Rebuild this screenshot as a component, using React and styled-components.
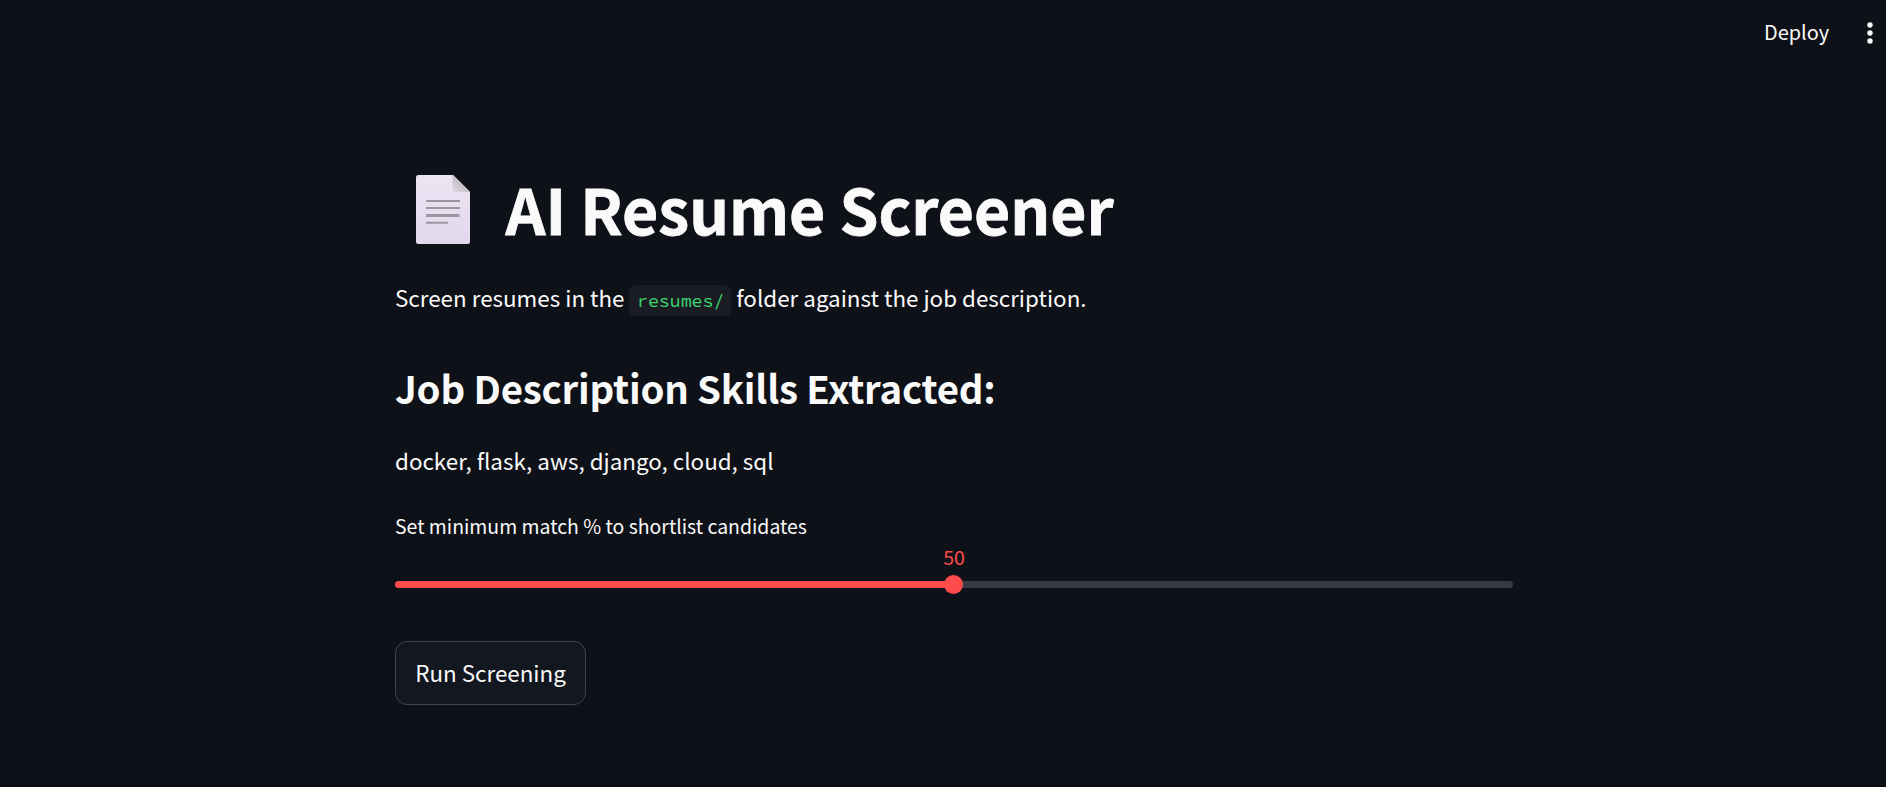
import React from "react";
import styled, { createGlobalStyle } from "styled-components";

const GlobalStyle = createGlobalStyle`
  * { box-sizing: border-box; }
  body {
    margin: 0;
    background: #0e1117;
    color: #fafafa;
    font-family: "Source Sans Pro", "Noto Sans CJK SC", sans-serif;
    overflow: hidden;
  }
`;

const Page = styled.div`
  height: 787px;
  display: flex;
  flex-direction: column;
  border-bottom: 2px solid #0a0a10;
`;

const Header = styled.header`
  height: 66px;
  display: flex;
  flex-shrink: 0;
  align-items: center;
  justify-content: flex-end;
  gap: 37px;
  padding-right: 12px;
`;

const DeployButton = styled.button`
  border: 0;
  padding: 0 0 2px;
  background: none;
  color: inherit;
  font: 400 19.9px/30px "Noto Sans CJK SC", sans-serif;
`;

const MenuButton = styled.button`
  display: flex;
  border: 0;
  padding: 0;
  background: none;
`;

const Main = styled.main`
  width: 1118px;
  margin-left: 395px;
  padding-top: 104px;
  display: flex;
  flex-direction: column;
  align-items: flex-start;
`;

const Title = styled.h1`
  display: flex;
  align-items: center;
  gap: 35.5px;
  height: 76px;
  margin: 0;
  padding-left: 21px;
  font-size: 62.4px;
  line-height: 76px;
  font-weight: 700;
  -webkit-text-stroke: 0.8px currentColor;
  white-space: nowrap;

  svg { margin-top: 3px; }
`;

const Paragraph = styled.p`
  margin: ${(p) => p.$gap}px 0 0;
  font-size: 22.4px;
  line-height: 40px;
  white-space: nowrap;
`;

const Code = styled.code`
  display: inline-block;
  height: 31px;
  padding: 0 7px 0 8.5px;
  margin: 0 5px 0 4px;
  border-radius: 6px;
  background: #1a1c24;
  color: #3dd56d;
  font: 400 18.2px/32px "Source Code Pro", "Noto Sans Mono CJK SC", "Liberation Mono", monospace;
`;

const Subtitle = styled.h2`
  margin: 42px 0 0;
  font-size: 38.4px;
  line-height: 56px;
  font-weight: 600;
  letter-spacing: -0.21px;
  white-space: nowrap;
`;

const Slider = styled.div`
  width: 100%;
  margin-top: 31px;
  display: flex;
  flex-direction: column;
`;

const SliderLabel = styled.label`
  font-size: 19.45px;
  line-height: 30px;
`;

const SliderValue = styled.output`
  align-self: center;
  margin-top: 1px;
  color: #ff4b4b;
  font-size: 19.6px;
  line-height: 30px;
`;

const Track = styled.div`
  height: 7px;
  margin-top: 9px;
  display: flex;
  align-items: center;
  border-radius: 4px;
  background: linear-gradient(to right, #ff4b4b 50%, #373a43 50%);
`;

const Thumb = styled.span`
  width: 19px;
  height: 19px;
  margin-left: calc(50% - 10px);
  flex-shrink: 0;
  border-radius: 50%;
  background: #ff4b4b;
`;

const RunButton = styled.button`
  width: 191px;
  height: 64px;
  margin-top: 53px;
  padding: 0 0 3px;
  border: 1px solid #41444c;
  border-radius: 12px;
  background: #131720;
  color: inherit;
  font: 400 22.4px/40px "Noto Sans CJK SC", sans-serif;
`;

function PageIcon() {
  return (
    <svg width="54" height="69" viewBox="0 0 54 69">
      <defs>
        <linearGradient id="paper" x1="0" y1="0" x2="0" y2="1">
          <stop offset="0" stopColor="#ede4f3" />
          <stop offset="1" stopColor="#e1d8ee" />
        </linearGradient>
        <linearGradient id="fold" x1="0.7" y1="0.3" x2="0.1" y2="1">
          <stop offset="0" stopColor="#bdbac0" />
          <stop offset="1" stopColor="#dbd5df" />
        </linearGradient>
      </defs>
      <path d="M2.5 0H37L54 17V66.500Q54 69 51.500 69H2.500Q0 69 0 66.500V2.500Q0 0 2.500 0Z" fill="url(#paper)" />
      <path d="M37 0L54 17H38.500Q36.500 17 36.500 15V0Z" fill="url(#fold)" />
      <path d="M10 26H44M10 33H44M10 47.800H32" stroke="#9d959f" strokeWidth="2" />
      <path d="M10 40.500H43.500" stroke="#9d959f" strokeWidth="3" />
    </svg>
  );
}

export default function App() {
  return (
    <Page>
      <GlobalStyle />
      <Header>
        <DeployButton>Deploy</DeployButton>
        <MenuButton aria-label="Menu">
          <svg width="8" height="24" viewBox="0 0 8 24" fill="#fafafa">
            <circle cx="4" cy="4" r="2.700" />
            <circle cx="4" cy="12" r="2.700" />
            <circle cx="4" cy="20" r="2.700" />
          </svg>
        </MenuButton>
      </Header>
      <Main>
        <Title>
          <PageIcon />
          <span>AI Resume Screener</span>
        </Title>
        <Paragraph $gap={31}>
          Screen resumes in the<Code>resumes/</Code>folder against the job description.
        </Paragraph>
        <Subtitle>Job Description Skills Extracted:</Subtitle>
        <Paragraph $gap={25}>docker, flask, aws, django, cloud, sql</Paragraph>
        <Slider>
          <SliderLabel>Set minimum match % to shortlist candidates</SliderLabel>
          <SliderValue>50</SliderValue>
          <Track>
            <Thumb />
          </Track>
        </Slider>
        <RunButton>Run Screening</RunButton>
      </Main>
    </Page>
  );
}
